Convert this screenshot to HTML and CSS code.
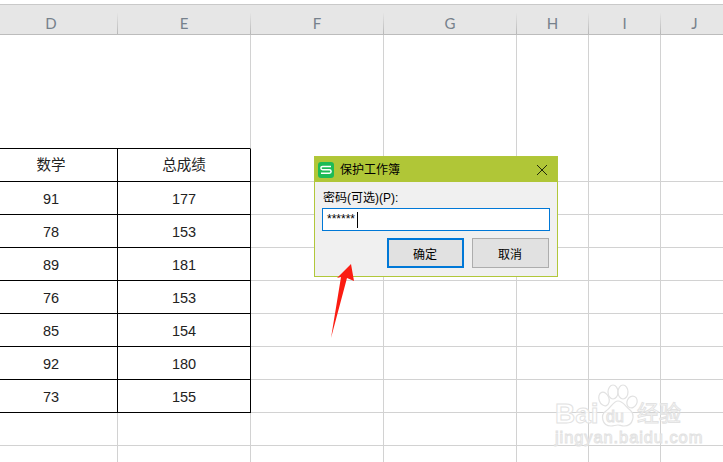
FILE: index.html
```html
<!DOCTYPE html>
<html lang="zh">
<head>
<meta charset="utf-8">
<title>保护工作簿</title>
<link rel="stylesheet" href="styles.css">
</head>
<body>
<div class="sheet">
  <div class="col-heads">
    <div class="col-head">D</div><div class="col-head">E</div><div class="col-head">F</div><div class="col-head">G</div><div class="col-head">H</div><div class="col-head">I</div><div class="col-head">J</div>
  </div>
  <div class="cells">
    <div class="cell title-cell"></div><div class="cell tall"></div><div class="cell tall"></div><div class="cell tall"></div><div class="cell tall"></div><div class="cell tall"></div>

    <div class="cell data data-head">数学</div><div class="cell data data-head">总成绩</div><div class="cell plain"></div><div class="cell plain"></div><div class="cell plain"></div><div class="cell plain"></div><div class="cell plain"></div>
    <div class="cell data">91</div><div class="cell data">177</div><div class="cell plain"></div><div class="cell plain"></div><div class="cell plain"></div><div class="cell plain"></div><div class="cell plain"></div>
    <div class="cell data">78</div><div class="cell data">153</div><div class="cell plain"></div><div class="cell plain"></div><div class="cell plain"></div><div class="cell plain"></div><div class="cell plain"></div>
    <div class="cell data">89</div><div class="cell data">181</div><div class="cell plain"></div><div class="cell plain"></div><div class="cell plain"></div><div class="cell plain"></div><div class="cell plain"></div>
    <div class="cell data">76</div><div class="cell data">153</div><div class="cell plain"></div><div class="cell plain"></div><div class="cell plain"></div><div class="cell plain"></div><div class="cell plain"></div>
    <div class="cell data">85</div><div class="cell data">154</div><div class="cell plain"></div><div class="cell plain"></div><div class="cell plain"></div><div class="cell plain"></div><div class="cell plain"></div>
    <div class="cell data">92</div><div class="cell data">180</div><div class="cell plain"></div><div class="cell plain"></div><div class="cell plain"></div><div class="cell plain"></div><div class="cell plain"></div>
    <div class="cell data">73</div><div class="cell data">155</div><div class="cell plain"></div><div class="cell plain"></div><div class="cell plain"></div><div class="cell plain"></div><div class="cell plain"></div>

    <div class="cell plain"></div><div class="cell plain"></div><div class="cell plain"></div><div class="cell plain"></div><div class="cell plain"></div><div class="cell plain"></div><div class="cell plain"></div>
    <div class="cell plain"></div><div class="cell plain"></div><div class="cell plain"></div><div class="cell plain"></div><div class="cell plain"></div><div class="cell plain"></div><div class="cell plain"></div>
  </div>
</div>

<section class="dialog">
  <header class="dialog-title">
    <svg class="app-icon" viewBox="0 0 16 16" aria-hidden="true">
      <rect width="16" height="16" rx="3" fill="#1dbb55"/>
      <path d="M13 4.4H4.6a1.5 1.5 0 0 0 0 3.4h6.8a1.5 1.5 0 0 1 0 3.4H3" fill="none" stroke="#fff" stroke-width="1.5"/>
    </svg>
    <span class="dialog-name">保护工作簿</span>
    <svg class="close-icon" viewBox="0 0 10 10" aria-hidden="true">
      <path d="M0 0L10 10M10 0L0 10" fill="none" stroke="#22280c" stroke-width="1"/>
    </svg>
  </header>
  <div class="dialog-body">
    <label class="field-label">密码(可选)(P):</label>
    <div class="password"><span class="stars">******</span><span class="caret"></span></div>
    <div class="actions">
      <button class="btn btn-primary">确定</button>
      <button class="btn">取消</button>
    </div>
  </div>
</section>

<svg class="arrow" viewBox="0 0 30 80" aria-hidden="true">
  <polygon points="23,1 26,18 19,15 3,75 13,14 9,15" fill="#fb1c12"/>
</svg>

<div class="watermark">
  <svg class="paw" viewBox="0 0 42 44" aria-hidden="true">
    <g fill="#fff" fill-opacity=".75" stroke="#e2e2e2" stroke-width="1.2">
      <ellipse cx="7" cy="15" rx="5" ry="7" transform="rotate(-20 7 15)"/>
      <ellipse cx="16" cy="8" rx="5" ry="7"/>
      <ellipse cx="26" cy="8" rx="5" ry="7"/>
      <ellipse cx="35" cy="18" rx="5" ry="6" transform="rotate(25 35 18)"/>
      <path d="M21 17c5 0 7 5 12 9 5 4 4 16-6 16-3 0-4-1-6-1-3 0-4 1-7 1-9 0-11-11-5-15 5-3 7-10 12-10z"/>
    </g>
  </svg>
  <span class="wm-bai">Bai</span>
  <span class="wm-du">du</span>
  <span class="wm-cn">经验</span>
  <span class="wm-url">jingyan.baidu.com</span>
</div>
</body>
</html>
```
FILE: styles.css
```css
* { box-sizing: border-box; }

html, body {
  margin: 0;
  height: 462px;
  overflow: hidden;
  background: #fff;
  font-family: "Liberation Sans", "Noto Sans CJK SC", sans-serif;
}

body { position: relative; }

.sheet {
  margin: 4px 0 0 -15px;
  width: 738px;
}

.col-heads,
.cells {
  display: grid;
  grid-template-columns: 133px 133px 133px 133px 72px 72px 68px;
}

.col-heads {
  height: 31px;
  background: #e6e6e6;
  border-top: 1px solid #c9c9c9;
  border-bottom: 1px solid #bcbcbc;
}

.col-head {
  padding: 8px 1px 0 0;
  text-align: center;
  font-family: Lato, "Liberation Sans", sans-serif;
  font-size: 15px;
  line-height: 20px;
  color: #76818c;
  background: linear-gradient(#e4e4e4, #b8b8b8) right bottom / 1px 21px no-repeat;
}

.col-head:last-child { background: none; }

.cells { grid-auto-rows: 33px; grid-template-rows: 114px; }

.cell {
  border-right: 1px solid #d2d2d2;
  border-bottom: 1px solid #d2d2d2;
}

.tall { border-bottom: 0; }

.title-cell {
  grid-column: span 2;
  border-bottom: 1px solid #000;
}

.data {
  display: flex;
  align-items: center;
  justify-content: center;
  padding-top: 2px;
  font-size: 14.5px;
  color: #222;
  border-right-color: #000;
  border-bottom-color: #000;
}

.data-head { padding: 0 0 3px; }

.dialog {
  position: absolute;
  left: 314px;
  top: 156px;
  width: 244px;
  height: 121px;
  display: flex;
  flex-direction: column;
  background: #f0f0f0;
  border: 1px solid #b1c73a;
  color: #000;
  font-size: 12px;
}

.dialog-title {
  display: flex;
  align-items: center;
  height: 25px;
  flex: none;
  padding: 0 10px 0 3px;
  background: #b0c637;
}

.app-icon { width: 16px; height: 16px; flex: none; }

.dialog-name {
  margin-left: 6px;
  flex: 1;
  font-size: 12px;
  line-height: 16px;
}

.close-icon { width: 10px; height: 10px; flex: none; }

.dialog-body {
  flex: 1;
  display: flex;
  flex-direction: column;
  padding: 8px 7px 0;
}

.field-label {
  height: 18px;
  padding-left: 1px;
  line-height: 16px;
}

.password {
  display: flex;
  align-items: center;
  width: 228px;
  height: 23px;
  padding-left: 4px;
  background: #fff;
  border: 1px solid #0078d7;
}

.stars {
  font-size: 12px;
  line-height: 15px;
  height: 15px;
}

.caret {
  width: 1px;
  height: 16px;
  margin-left: 2px;
  background: #000;
}

.actions {
  display: flex;
  justify-content: flex-end;
  gap: 8px;
  margin-top: 7px;
  padding-right: 1px;
}

.btn {
  width: 77px;
  height: 30px;
  padding: 0 1px 0 0;
  background: #e1e1e1;
  border: 1px solid #adadad;
  border-radius: 0;
  font: inherit;
  color: #000;
}

.btn-primary { border: 2px solid #0078d7; }

.arrow {
  position: absolute;
  left: 328px;
  top: 263px;
  width: 30px;
  height: 80px;
}

.watermark {
  position: absolute;
  left: 0;
  top: 0;
  width: 723px;
  height: 462px;
  pointer-events: none;
  color: rgba(255, 255, 255, .75);
  -webkit-text-stroke: 1px #e2e2e2;
}

.watermark span { position: absolute; white-space: nowrap; }

.paw {
  position: absolute;
  left: 597px;
  top: 384px;
  width: 42px;
  height: 44px;
}

.wm-bai {
  left: 555px;
  top: 398px;
  font-size: 28px;
  line-height: 32px;
  font-weight: 700;
}

.wm-du {
  left: 606px;
  top: 408px;
  font-size: 16px;
  line-height: 18px;
}

.wm-cn {
  left: 637px;
  top: 401px;
  font-size: 22px;
  line-height: 26px;
}

.wm-url {
  left: 555px;
  top: 428px;
  font-size: 16.5px;
  line-height: 18px;
  letter-spacing: .9px;
}
```
